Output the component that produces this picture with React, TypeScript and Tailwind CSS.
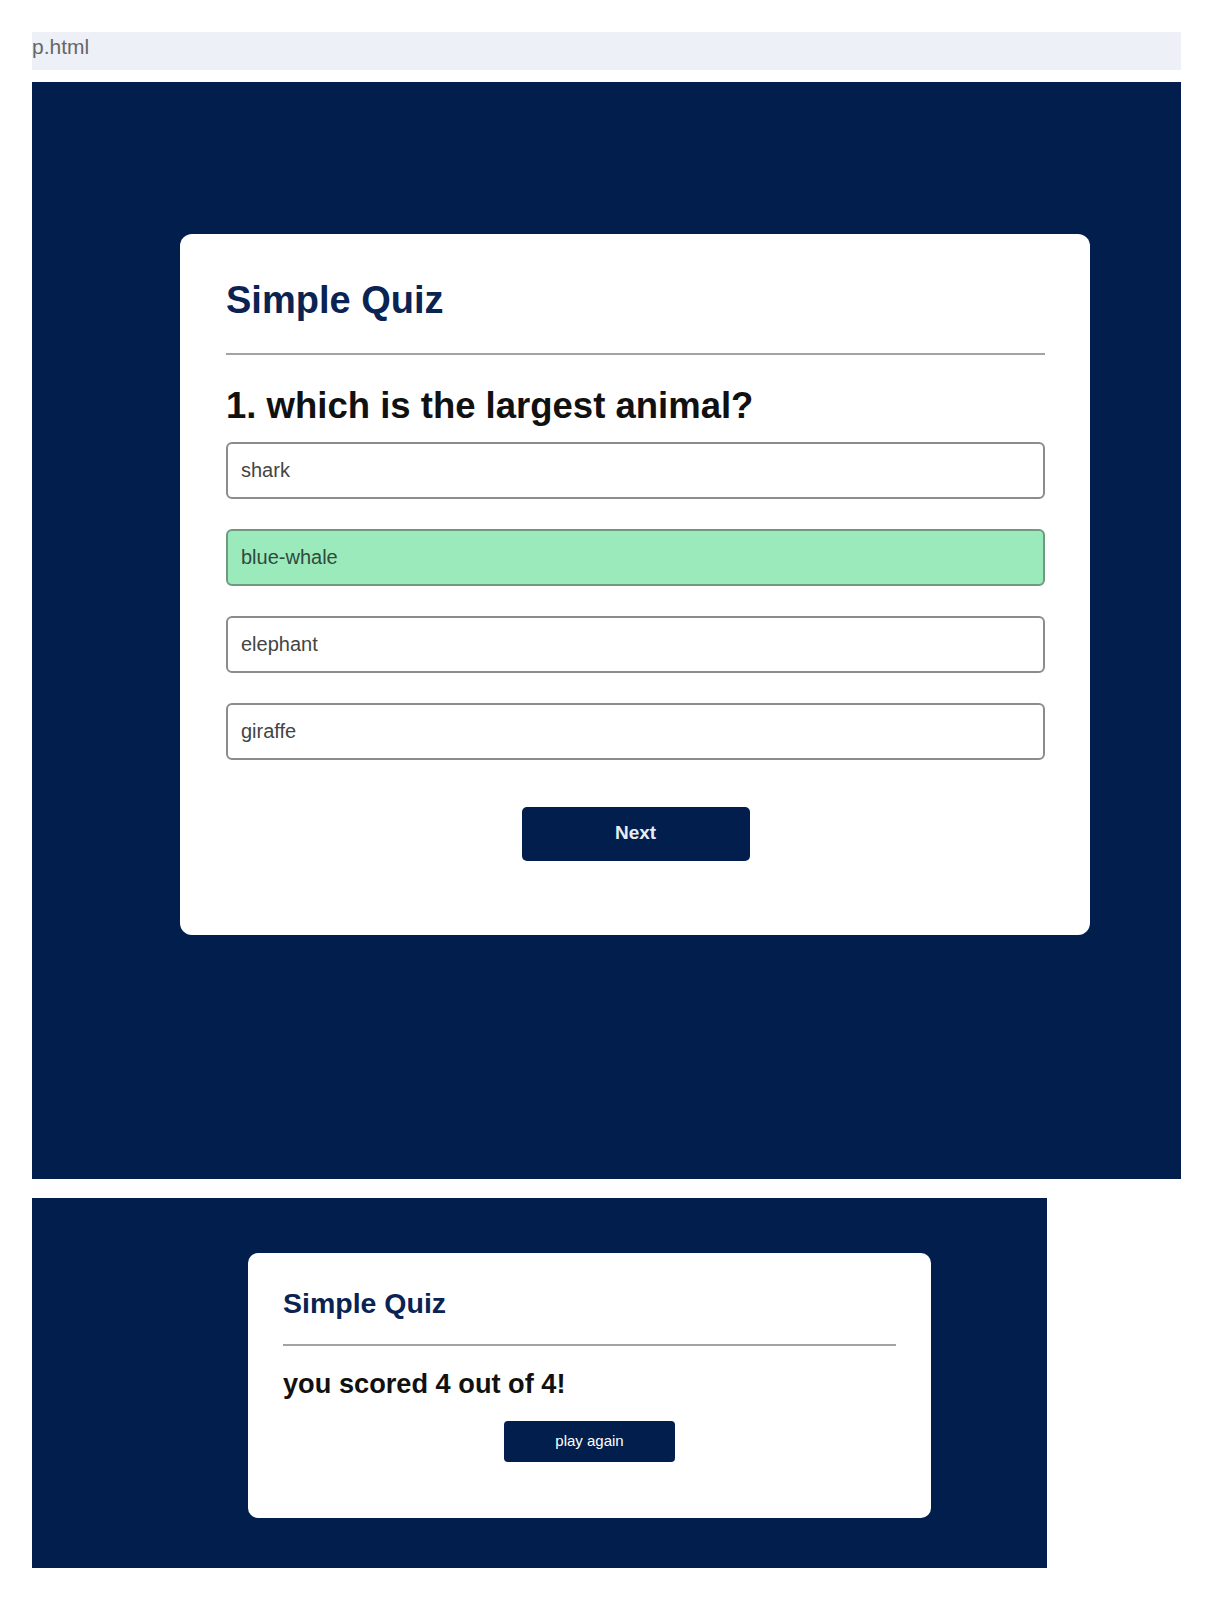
import React from "react";

const options = ["shark", "blue-whale", "elephant", "giraffe"];

export default function App() {
  return (
    <div
      className="w-[1213px] h-[1600px] bg-white pt-[32px] pl-[32px]"
      style={{ fontFamily: '"Liberation Sans", Arial, sans-serif' }}
    >
      <div className="w-[1149px] h-[38px] bg-[#eef0f8] pt-[4px] text-[21px] leading-none text-[#666]">
        p.html
      </div>

      <div className="mt-[12px] w-[1149px] h-[1097px] bg-[#011e4d] pt-[152px] pl-[148px]">
        <div className="w-[910px] h-[701px] bg-white rounded-[12px] pt-[47px] pl-[46px] pr-[45px] flex flex-col">
          <h1 className="text-[38px] font-bold leading-none text-[#0a2352]">Simple Quiz</h1>
          <div className="mt-[34px] h-[2px] bg-[#a3a3a3]" />
          <h2 className="mt-[33px] text-[36.5px] font-bold leading-none text-[#111]">
            1. which is the largest animal?
          </h2>
          <div className="mt-[17px] flex flex-col gap-[30px]">
            {options.map((o) =>
              o === "blue-whale" ? (
                <div
                  key={o}
                  className="h-[57px] border-2 border-[#6f9a80] bg-[#9aeabb] rounded-[6px] pl-[13px] flex items-center text-[20px] text-[#2f4a3b]"
                >
                  {o}
                </div>
              ) : (
                <div
                  key={o}
                  className="h-[57px] border-2 border-[#8c8c8c] bg-white rounded-[6px] pl-[13px] flex items-center text-[20px] text-[#444]"
                >
                  {o}
                </div>
              )
            )}
          </div>
          <button className="mt-[47px] mx-auto w-[228px] h-[54px] bg-[#011e4d] rounded-[5px] text-[#e8ecf4] text-[19px] font-bold">
            Next
          </button>
        </div>
      </div>

      <div className="mt-[19px] w-[1015px] h-[370px] bg-[#011e4d] pt-[55px] pl-[216px]">
        <div className="w-[683px] h-[265px] bg-white rounded-[10px] pt-[36px] px-[35px] flex flex-col">
          <h1 className="text-[28.5px] font-bold leading-none text-[#0a2352]">Simple Quiz</h1>
          <div className="mt-[26px] h-[2px] bg-[#a3a3a3]" />
          <p className="mt-[24px] text-[27.2px] font-bold leading-none text-[#111]">
            you scored 4 out of 4!
          </p>
          <button className="mt-[24px] mx-auto w-[171px] h-[41px] bg-[#011e4d] rounded-[4px] text-white text-[15px]">
            play again
          </button>
        </div>
      </div>
    </div>
  );
}
